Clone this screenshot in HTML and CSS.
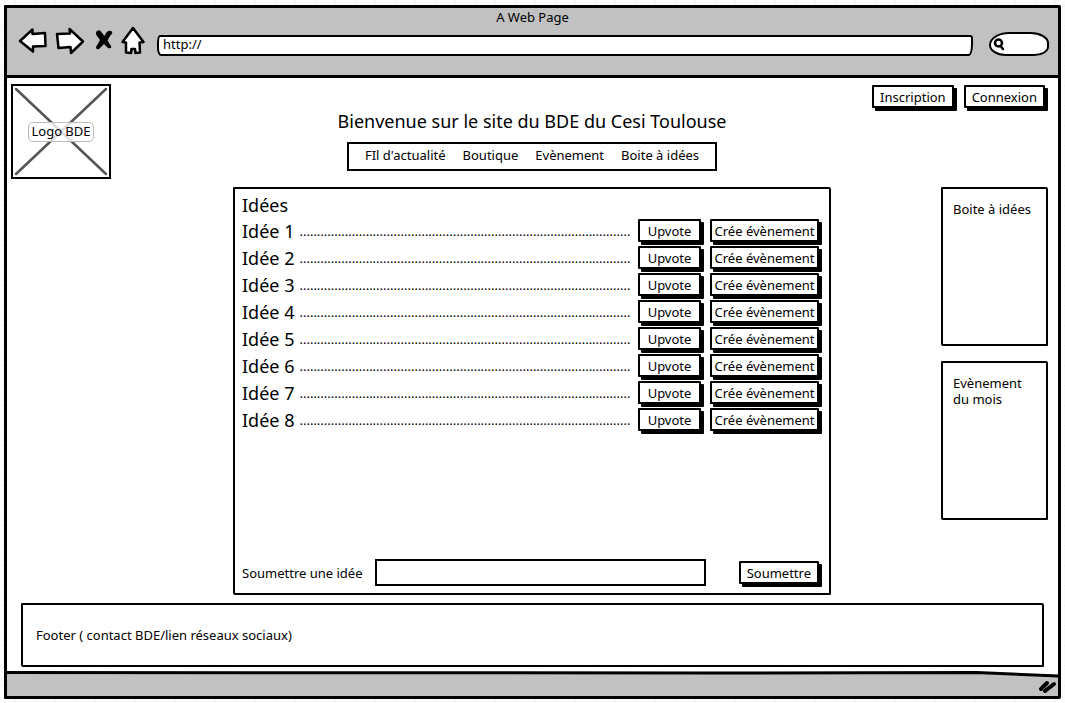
FILE: index.html
```html
<!DOCTYPE html>
<html lang="fr">
<head>
<meta charset="utf-8">
<title>A Web Page</title>
<link rel="stylesheet" href="styles.css">
</head>
<body>
<div class="window">
  <header class="chrome">
    <div class="chrome-title">A Web Page</div>
    <div class="toolbar">
      <button class="tool" aria-label="Précédent"><svg width="30" height="28" viewBox="0 0 30 28"><path class="outline" d="M2 13 L14.500 1.500 L14.500 6 L27 5 L27.500 18 L15 18.500 L15 23.500 Z"/></svg></button>
      <button class="tool" aria-label="Suivant"><svg width="30" height="28" viewBox="0 0 30 28"><path class="outline" d="M1 6 L14 5.500 L13.500 1 L27 13.500 L15 25 L14.500 19 L2.500 20 Z"/></svg></button>
      <button class="tool" aria-label="Arrêter"><svg width="18" height="28" viewBox="0 0 18 28"><path d="M3 3 Q6 1 8 5 L10.500 8 Q13 2 17 3 Q20 4 16 8 L13.500 12.500 L17 18 Q18 21 14 20 L10 16 L5 21 Q2 22 2 19 L6 12 L3 8 Q1 5 3 3Z"/></svg></button>
      <button class="tool" aria-label="Accueil"><svg width="24" height="28" viewBox="0 0 24 28"><path class="outline" d="M13 0 L23.500 14 L19.500 14.500 L20 24.500 L15.500 25 L15 21 L11.500 21 L11 25 L6 24.500 L6 14.500 L2.500 14 Z"/></svg></button>
      <input class="address" type="text" value="http://" aria-label="Adresse">
      <label class="search" aria-label="Rechercher"><svg width="14" height="14" viewBox="0 0 14 14"><circle class="lens" cx="5.500" cy="6" r="3.500"/><path class="lens" d="M7.500 9 L10 12"/></svg><input class="search-field" type="text" aria-label="Rechercher"></label>
    </div>
  </header>

  <main class="page">
    <div class="logo">
      <svg class="logo-cross" viewBox="0 0 94 89" preserveAspectRatio="none"><path d="M2 2 L92 87 M92 2 L2 87"/></svg>
      <span class="logo-label">Logo BDE</span>
    </div>
    <div class="intro">
      <h1 class="heading">Bienvenue sur le site du BDE du Cesi Toulouse</h1>
      <nav class="menu">
        <a href="#">FIl d'actualité</a>
        <a href="#">Boutique</a>
        <a href="#">Evènement</a>
        <a href="#">Boite à idées</a>
      </nav>
    </div>
    <div class="account">
      <button class="btn">Inscription</button>
      <button class="btn">Connexion</button>
    </div>

    <section class="ideas frame">
      <h2 class="ideas-title">Idées</h2>
      <ul class="list">
        <li class="row"><span class="name">Idée 1</span><span class="leader">...............................................................................................</span><button class="btn vote">Upvote</button><button class="btn create">Crée évènement</button></li>
        <li class="row"><span class="name">Idée 2</span><span class="leader">...............................................................................................</span><button class="btn vote">Upvote</button><button class="btn create">Crée évènement</button></li>
        <li class="row"><span class="name">Idée 3</span><span class="leader">...............................................................................................</span><button class="btn vote">Upvote</button><button class="btn create">Crée évènement</button></li>
        <li class="row"><span class="name">Idée 4</span><span class="leader">...............................................................................................</span><button class="btn vote">Upvote</button><button class="btn create">Crée évènement</button></li>
        <li class="row"><span class="name">Idée 5</span><span class="leader">...............................................................................................</span><button class="btn vote">Upvote</button><button class="btn create">Crée évènement</button></li>
        <li class="row"><span class="name">Idée 6</span><span class="leader">...............................................................................................</span><button class="btn vote">Upvote</button><button class="btn create">Crée évènement</button></li>
        <li class="row"><span class="name">Idée 7</span><span class="leader">...............................................................................................</span><button class="btn vote">Upvote</button><button class="btn create">Crée évènement</button></li>
        <li class="row"><span class="name">Idée 8</span><span class="leader">...............................................................................................</span><button class="btn vote">Upvote</button><button class="btn create">Crée évènement</button></li>
      </ul>
      <form class="submit">
        <label for="idea">Soumettre une idée</label>
        <input id="idea" class="idea-field" type="text">
        <button class="btn" type="button">Soumettre</button>
      </form>
    </section>

    <aside class="side">
      <div class="card frame">Boite à idées</div>
      <div class="card frame">Evènement du mois</div>
    </aside>
  </main>

  <footer class="site-footer frame">Footer ( contact BDE/lien réseaux sociaux)</footer>
  <div class="statusbar">
    <svg class="status-edge" viewBox="0 0 1052 8" preserveAspectRatio="none"><path class="edge-fill" d="M0 0 H1052 V4.500 L940 2 L0 1.500Z"/><path class="edge-line" d="M0 1.500 L700 2 L970 1.500 L1052 5"/></svg>
    <svg class="grip" width="20" height="16" viewBox="0 0 20 16"><path d="M3 9 L9 3"/><path d="M7 11 L16 4"/></svg>
  </div>
</div>
</body>
</html>
```
FILE: styles.css
```css
* { box-sizing: border-box; }

body {
  margin: 0;
  padding: 5px 4px 4px;
  background-color: #fcfcfc;
  background-image:
    linear-gradient(90deg, #f2f2f2 1px, transparent 1px),
    linear-gradient(#f2f2f2 1px, transparent 1px);
  background-size: 20px 20px;
  background-position: 15px 5px;
  font: 13px/16px "Noto Sans", sans-serif;
  color: #000;
}

button, input { font: inherit; color: inherit; }

.window {
  display: flex;
  flex-direction: column;
  min-height: calc(100vh - 9px);
  border: 3px solid #000;
  border-radius: 1px 2px 2px 1px;
  background: #fff;
}

.chrome {
  height: 70px;
  background: #c1c1c1;
  border-bottom: 3px solid #000;
}

.chrome-title { text-align: center; line-height: 18px; }

.toolbar {
  display: flex;
  align-items: flex-end;
  gap: 8px;
  padding: 2px 9px 0 11px;
}

.tool {
  display: flex;
  padding: 0;
  border: 0;
  background: none;
}

.tool svg { overflow: visible; }

.outline {
  fill: #fff;
  stroke: #000;
  stroke-width: 2.5;
  stroke-linejoin: round;
}

.address {
  flex: 1;
  min-width: 0;
  height: 21px;
  margin: 0 8px 0 5px;
  padding: 0 4px 3px;
  border: 2px solid #000;
  border-radius: 3px 3px 4px 4px / 8px 3px 12px 8px;
  background: #fff;
}

.search {
  display: flex;
  align-items: center;
  width: 60px;
  height: 24px;
  padding-left: 2px;
  border: 2px solid #000;
  border-radius: 22px 20px 16px 18px / 14px 12px 10px 12px;
  background: #fff;
}

.search svg { flex: none; }

.lens { fill: none; stroke: #000; stroke-width: 2.5; stroke-linecap: round; }

.search-field {
  width: 32px;
  padding: 0;
  border: 0;
  background: none;
}

.page {
  flex: 1;
  display: grid;
  grid-template-columns: 222px minmax(0, 1fr) 217px;
  grid-template-rows: auto 1fr;
  row-gap: 8px;
  padding: 6px 10px 0 4px;
}

.logo {
  display: grid;
  place-items: center;
  width: 100px;
  height: 95px;
  border: 2px solid #000;
}

.logo > * { grid-area: 1 / 1; }

.logo-cross {
  width: 94px;
  height: 89px;
  fill: none;
  stroke: #555;
  stroke-width: 2.5;
  stroke-linecap: round;
}

.logo-label {
  padding: 0 2px 2px;
  border: 1px solid #bbb;
  border-radius: 5px;
  background: rgba(255, 255, 255, .8);
}

.intro {
  display: flex;
  flex-direction: column;
  align-items: center;
  gap: 9px;
  padding-top: 25px;
}

.heading {
  margin: 0;
  font-size: 18px;
  font-weight: 400;
  line-height: 24px;
}

.menu {
  display: flex;
  gap: 17px;
  padding: 3px 16px 6px;
  border: 2px solid #000;
}

.menu a { color: inherit; text-decoration: none; }

.account {
  display: flex;
  justify-content: flex-end;
  align-items: flex-start;
  gap: 10px;
  padding: 1px 3px 0 0;
}

.btn {
  height: 23px;
  padding: 0 6px;
  border: 2px solid #000;
  border-radius: 1px;
  background: #fff;
  box-shadow: 3px 3px 0 #000;
  line-height: 18px;
  white-space: nowrap;
}

.frame {
  border: 2px solid #000;
  border-radius: 1px 2px 1px 2px;
  background: #fff;
}

.ideas {
  grid-column: 2;
  display: flex;
  flex-direction: column;
  padding: 4px 8px 7px 7px;
}

.ideas-title, .name {
  margin: 0;
  font-size: 18px;
  font-weight: 400;
  line-height: 24px;
  white-space: nowrap;
}

.list { margin: 0; padding: 0; list-style: none; }

.row {
  display: flex;
  align-items: center;
  height: 27px;
}

.name { margin-right: 5px; }

.leader {
  flex: 1;
  min-width: 0;
  margin-right: 5px;
  overflow: hidden;
  white-space: nowrap;
}

.vote { width: 63px; margin-right: 9px; }

.create { width: 109px; margin-right: 2px; padding: 0; }

.submit {
  display: flex;
  align-items: center;
  margin: auto 2px 0 0;
}

.idea-field {
  flex: 1;
  min-width: 0;
  height: 27px;
  margin: 0 33px 0 12px;
  border: 2px solid #000;
}

.side {
  display: flex;
  flex-direction: column;
  gap: 15px;
  justify-self: end;
  width: 107px;
}

.card { height: 159px; padding: 12px 10px; }

.site-footer {
  margin: 8px 14px 4px;
  padding: 22px 13px;
}

.statusbar {
  display: flex;
  flex-direction: column;
  justify-content: space-between;
  height: 25px;
  background: #c1c1c1;
}

.status-edge { display: block; width: 100%; height: 8px; }

.edge-fill { fill: #fff; }

.edge-line { fill: none; stroke: #000; stroke-width: 3; }

.grip {
  align-self: flex-end;
  fill: none;
  stroke: #000;
  stroke-width: 4;
  stroke-linecap: round;
}
```
